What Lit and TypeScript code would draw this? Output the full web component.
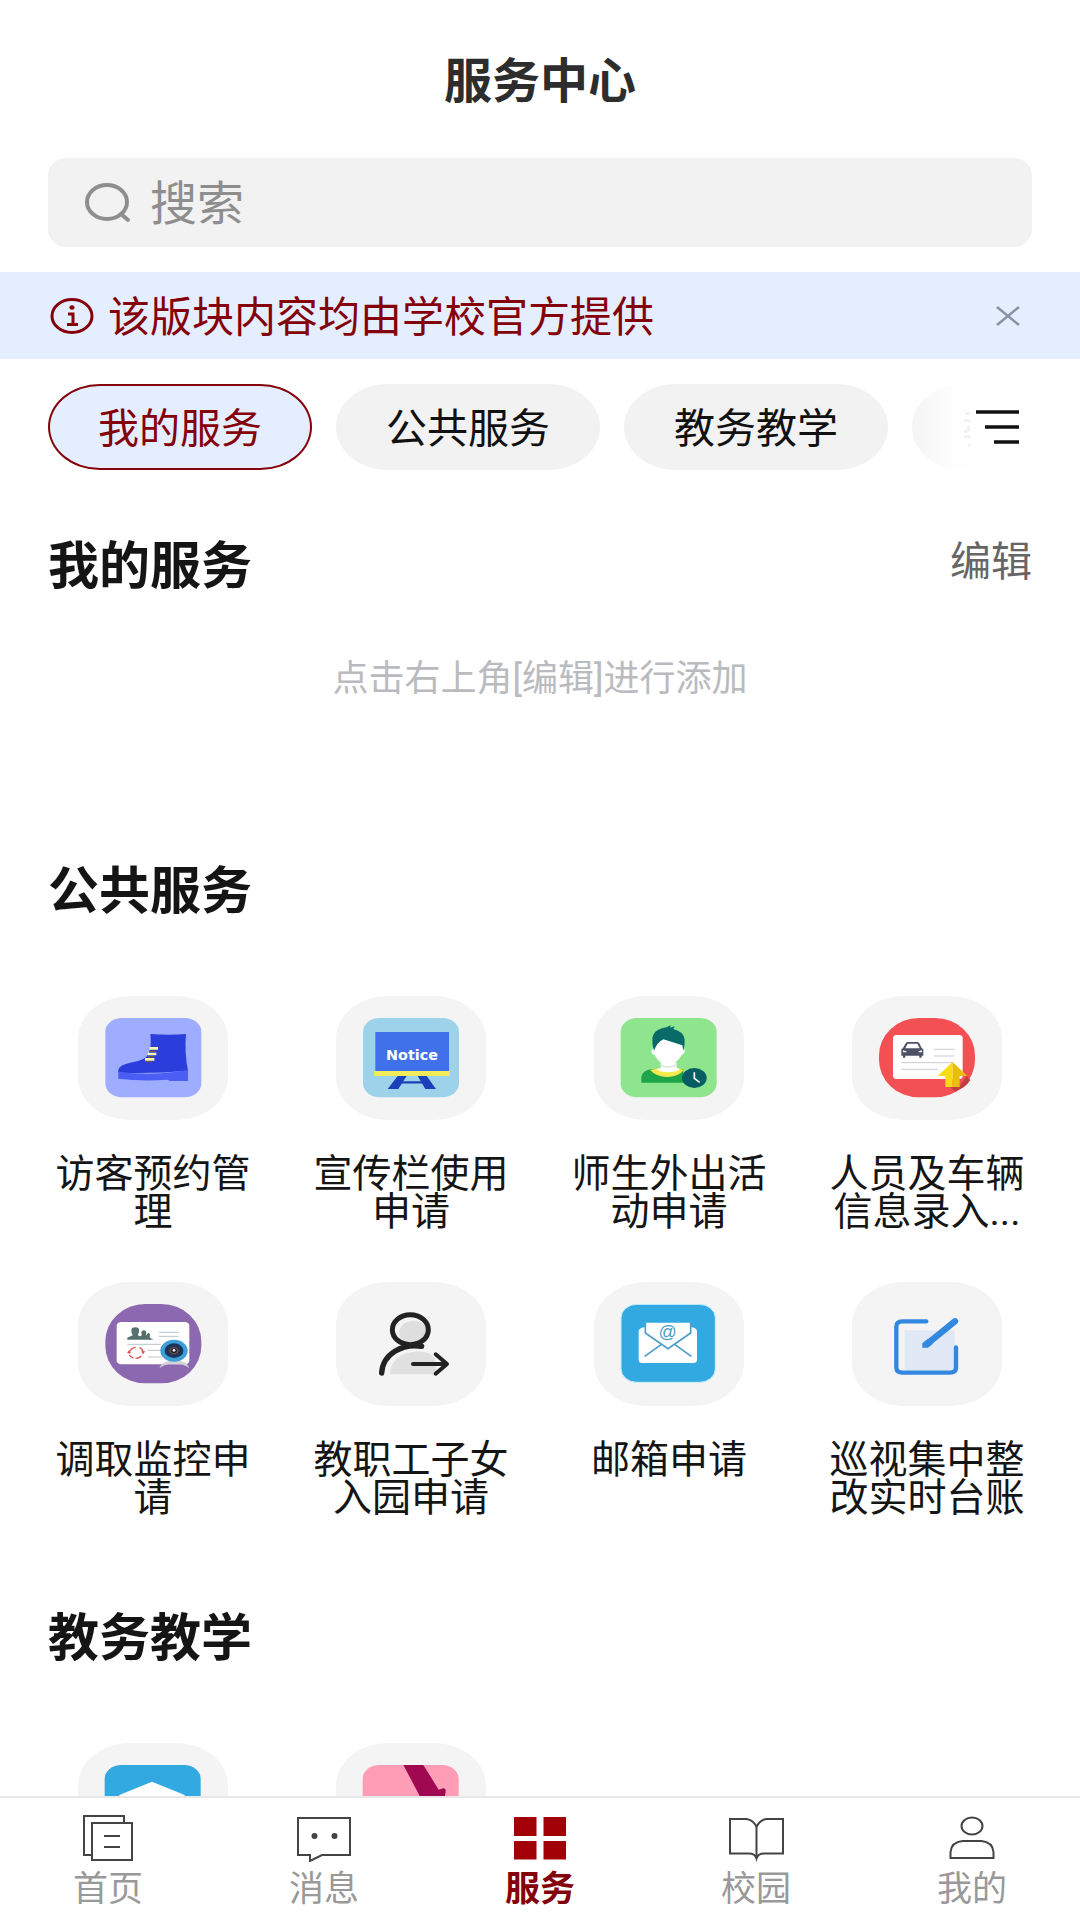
import { LitElement, html, svg, css, TemplateResult, SVGTemplateResult } from "lit";
import { customElement, property, state } from "lit/decorators.js";

const lens = html`<svg width="48" height="40" viewBox="0 0 48 40" fill="none" stroke="#8e8e8e" stroke-width="4" stroke-linecap="round" aria-hidden="true">
  <ellipse cx="23" cy="19" rx="20" ry="17" /><path d="M37 31l7 6" />
</svg>`;

const info = html`<svg width="44" height="38" viewBox="0 0 44 38" fill="none" stroke="#84000a" stroke-width="3" aria-hidden="true">
  <ellipse cx="22" cy="19" rx="20" ry="16.5" /><path d="M18 17h5v10M17 27.5h11" />
  <ellipse cx="22" cy="10.5" rx="2.6" ry="2.2" fill="#84000a" stroke="none" />
</svg>`;

const cross = html`<svg width="24" height="20" viewBox="0 0 24 20" fill="none" stroke="#8690a0" stroke-width="2.4" aria-hidden="true">
  <path d="M1 1l22 18M23 1L1 19" />
</svg>`;

const bars = html`<svg width="44" height="36" viewBox="0 0 44 36" fill="none" stroke="#111" stroke-width="3.4" aria-hidden="true">
  <path d="M0 3h43M9 18h34M18 33h25" />
</svg>`;

/* Service pictures share one 450 x 372 canvas, the proportions of their tile. */
const pictures: Record<string, SVGTemplateResult> = {
  boot: svg`
    <rect x="82" y="66" width="288" height="238" rx="50" ry="42" fill="#9eadff" />
    <path d="M217 114q54 5 107 0q-5 56 6 110q-104 10-209 6q-4-18 22-26c40-10 62-10 72-38q5-20 2-52z" fill="#2b3edb" />
    <path d="M121 227q100 14 209-5v33h-54l-8-4q-76 6-147-3z" fill="#4a5ef6" />
    <path d="M213 166h22M207 182h22M202 197h20" stroke="#6b5a2a" stroke-width="4" />
    <path d="M215 157h25M209 174h26M201 190h28" stroke="#fdf9a8" stroke-width="8" />`,
  notice: svg`
    <rect x="81" y="66" width="288" height="238" rx="50" ry="42" fill="#9cd3ea" />
    <path d="M185 240h27l-25 39h-32zM245 240h27l28 39h-32z" fill="#1b41ba" />
    <path d="M198 259h64" stroke="#1b41ba" stroke-width="7" />
    <rect x="118" y="108" width="221" height="117" fill="#4071ea" />
    <rect x="114" y="225" width="228" height="15" fill="#f1eb5c" />
    <text x="228" y="191" text-anchor="middle" font-family="DejaVu Sans, sans-serif" font-weight="700" font-size="43" fill="#fff">Notice</text>`,
  person: svg`
    <rect x="80" y="66" width="288" height="238" rx="50" ry="42" fill="#8fe58d" />
    <path d="M142 260v-18q4-18 28-22h98v40z" fill="#1ea54a" />
    <path d="M168 222l32-6h48l22 6q-18 21-50 21t-52-21z" fill="#f5ea4c" />
    <path d="M200 200h48v16l10 3q-12 10-36 10t-34-10l12-3z" fill="#fff" />
    <path d="M200 204q24 14 48 0v5q-24 12-48 0z" fill="#dde3e2" />
    <path d="M177 128h91v30q7 2 4 9q-3 9-10 11q-8 17-26 27q-14 7-28 0q-18-10-25-27q-9-2-11-12q0-8 5-8z" fill="#fff" />
    <path d="M180 165q-6-16-5-38q4-24 29-30q15-1 26-10l-2 8l14-4l-4 8q32 8 34 32q1 16-4 34l-3-17l-57-18q-20 10-28 35z" fill="#086b68" />
    <ellipse cx="301" cy="246" rx="37" ry="30" fill="#075d62" />
    <path d="M301 229v18l16 12" fill="none" stroke="#fff" stroke-width="5" />`,
  car: svg`
    <rect x="81" y="66" width="288" height="238" rx="120" ry="112" fill="#f25052" />
    <path d="M344 240l11 12q-14 24-46 34l-14-13h26z" fill="#c23d3e" />
    <rect x="123" y="117" width="209" height="132" rx="12" ry="10" fill="#fff" />
    <path d="M246 160h62M246 180h62M148 200h155M148 220h110" stroke="#c9ccd2" stroke-width="3" />
    <path d="M148 160l5-4l8-14q2-4 7-4h27q5 0 7 4l7 14l5 4v19h-5v6h-7v-6h-42v6h-7v-6h-5zM167 143l-7 14h43l-7-14zM153 163v6h10v-3zM210 163v6h-10v-3z" fill="#4c5165" fill-rule="evenodd" />
    <path d="M302 198l-45 42h23v33h22z" fill="#fada12" /><path d="M302 198l44 42h-23v33h-21z" fill="#e8bd0c" />`,
  camera: svg`
    <rect x="82" y="66" width="288" height="238" rx="120" ry="112" fill="#8b68b0" />
    <rect x="116" y="120" width="218" height="127" rx="14" ry="11" fill="#fff" />
    <path d="M148 173v-6l16-7q-4-6-4-14q0-10 12-10t11 10q0 8-4 14l8 3q4-2 4-5q-4-12 6-13q10 0 7 12l1 4q1-9 7-8q6 2 3 12l2 3l9 5z" fill="#55706f" />
    <path d="M243 151h59M243 163h59M148 187h100M209 205h45M209 225h45" stroke="#bcc5ca" stroke-width="3" />
    <g fill="none" stroke="#dc5150" stroke-width="4"><path d="M153 215q3-17 20-19M184 197q12 5 11 17M190 222q-6 7-17 7M166 228q-9-3-12-10" /></g>
    <path d="M147 213h12l-6-8zM190 208h12l-7 9z" fill="#dc5150" />
    <path d="M244 259q8-22 32-22h28q24 0 29 22q-12-11-28-12h-34q-14 1-27 12z" fill="#d7d2d9" />
    <ellipse cx="288" cy="206" rx="41" ry="33" fill="#3d9fd8" /><ellipse cx="288" cy="206" rx="28" ry="22" fill="#1c3458" />
    <ellipse cx="288" cy="206" rx="14" ry="11" fill="#72504f" /><ellipse cx="288" cy="206" rx="9" ry="7" fill="#261c27" />
    <ellipse cx="288" cy="205" rx="4" ry="4" fill="#fff" />`,
  leave: svg`
    <ellipse cx="232" cy="153" rx="42" ry="37" fill="#dedede" />
    <path d="M162 277q4-64 84-69q38 2 50 20l6 49z" fill="#e0e0e0" />
    <g fill="none" stroke="#222" stroke-linecap="round" stroke-linejoin="round">
      <ellipse cx="223" cy="143" rx="54" ry="45" stroke-width="15" />
      <path d="M137 273C140 215 200 184 257 193" stroke-width="16" />
      <path d="M231 246h101M299 217l34 29l-34 29" stroke-width="12" />
    </g>`,
  mail: svg`
    <rect x="81" y="67" width="283" height="234" rx="48" ry="40" fill="#32a9e1" stroke="#c9f1ff" stroke-width="3" />
    <path d="M134 147q2-9 16-11h5v-14h134v14h5q13 2 15 11v88q-1 8-10 8H144q-9 0-10-8z" fill="#fff" />
    <path d="M154 122v31l68 47l68-47v-31M152 223l49-35M292 223l-49-35" fill="none" stroke="#4a9fc8" stroke-width="5" />
    <text x="221" y="169" text-anchor="middle" font-family="Liberation Sans, sans-serif" font-size="54" fill="#4a9fc8">@</text>`,
  edit: svg`
    <rect x="158" y="145" width="150" height="120" fill="#dfe8f4" />
    <g fill="none" stroke="#3188de">
      <path d="M223 118h-72q-18 0-18 16v122q0 16 18 16h143q18 0 18-16v-60" stroke-width="13" stroke-linecap="round" />
      <path d="M309 118l-84 68" stroke-width="19" stroke-linecap="round" />
    </g>
    <path d="M211 184l16-13l16 14l-13 11q-2 1-4 1h-15z" fill="#3188de" />`,
  school: svg`
    <rect x="80" y="66" width="288" height="238" rx="50" ry="42" fill="#32a9e1" />
    <path d="M222 116l98 40v14l-98 40l-98-40v-14z" fill="#fff" />`,
  draw: svg`
    <rect x="80" y="66" width="288" height="238" rx="50" ry="42" fill="#ff9db6" />
    <path d="M202 66h60l46 74l14-4q8 0 7 10l-4 24h-68z" fill="#a00850" />
    <path d="M126 166q12-9 24 0v10h-24z" fill="#a00850" />`,
};

const navIcons: Record<string, SVGTemplateResult> = {
  home: svg`<path d="M44 9V2H4v39h8M12 9h40v37H12zM24 22h16M24 33h16" />`,
  message: svg`<path d="M2 4h52v37H26l-12 6v-6H2z" /><ellipse cx="18.500" cy="22" rx="2" ry="2" fill="#444" /><ellipse cx="38.500" cy="22" rx="2" ry="2" fill="#444" />`,
  grid: svg`<path d="M2 3h22.500v19H2zM31.500 3H54v19H31.500zM2 27h22.500v18.500H2zM31.500 27H54v18.500H31.500z" fill="#a20007" stroke="none" />`,
  book: svg`<path d="M28.500 45V13q-3-7-10-8H2v34.500h19q6 0 7.500 5q1.500-5 7.500-5h19V5H38.500q-7 1-10 8" />`,
  user: svg`<ellipse cx="28" cy="12" rx="10.500" ry="8.500" /><path d="M6.500 44V38q1-10 12-11h19q11 1 12 11v6z" />`,
};

@customElement("service-tile")
class ServiceTile extends LitElement {
  @property() picture = "";
  @property() label = "";

  static styles = css`
    :host { display: block; }
    .link { display: flex; flex-direction: column; align-items: center; gap: 35px; color: #151515; text-decoration: none; }
    .tile { display: block; width: 150px; height: 124px; border-radius: 52px / 43px; background: #f4f4f4; overflow: hidden; }
    .label { width: 200px; min-height: 76px; font-size: 39px; line-height: 38px; text-align: center; }
  `;

  render() {
    return html`<a class="link" href="#">
      <svg class="tile" viewBox="0 0 450 372" aria-hidden="true">${pictures[this.picture]}</svg>
      <span class="label">${this.label}</span>
    </a>`;
  }
}

@customElement("app-root")
class AppRoot extends LitElement {
  @state() private tab = "我的服务";
  @state() private noticeShown = true;

  private tabs = ["我的服务", "公共服务", "教务教学", "教工服务"];
  private publicServices = [
    ["boot", "访客预约管理"],
    ["notice", "宣传栏使用申请"],
    ["person", "师生外出活动申请"],
    ["car", "人员及车辆信息录入..."],
    ["camera", "调取监控申请"],
    ["leave", "教职工子女入园申请"],
    ["mail", "邮箱申请"],
    ["edit", "巡视集中整改实时台账"],
  ];
  private teachingServices = [["school", ""], ["draw", ""]];
  private nav = [["home", "首页"], ["message", "消息"], ["grid", "服务"], ["book", "校园"], ["user", "我的"]];

  static styles = css`
    :host {
      display: flex; flex-direction: column; height: 100vh; background: #fff; color: #151515;
      font-family: Roboto, "Noto Sans CJK SC", sans-serif;
    }
    * { box-sizing: border-box; }
    button { border: 0; padding: 0; background: none; font: inherit; color: inherit; cursor: pointer; }
    svg { display: block; flex: none; }
    .page { flex: 1; min-height: 0; overflow: hidden auto; scrollbar-width: none; }
    .title { margin: 0; padding-top: 50px; font-size: 48px; line-height: 64px; font-weight: 700; text-align: center; color: #2d2d2d; }
    .search { display: flex; align-items: center; gap: 18px; height: 89px; margin: 44px 48px 25px; padding: 0 36px; border-radius: 18px; background: #f2f2f2; }
    .search-box { flex: 1; min-width: 0; border: 0; padding: 2px 0 0; outline: 0; background: none; font: inherit; font-size: 47px; line-height: 64px; color: #333; }
    .search-box::placeholder { color: #8e8e8e; opacity: 1; }
    .notice { display: flex; align-items: center; gap: 14px; height: 87px; padding: 0 60px 0 50px; background: #e5eeff; color: #84000a; }
    .notice-text { flex: 1; margin: 0; padding-top: 4px; font-size: 42px; line-height: 64px; white-space: nowrap; }
    .tabs { display: flex; margin-top: 25px; padding-left: 48px; }
    .tab-list { display: flex; flex: 1; min-width: 0; gap: 24px; overflow: hidden; }
    .tab { flex: none; width: 264px; height: 86px; padding-top: 4px; border-radius: 52px / 43px; background: #f2f2f2; font-size: 41px; line-height: 64px; color: #111; }
    .tab.active { border: 2px solid #84000a; background: #e5eeff; color: #84000a; }
    .menu { position: relative; display: flex; flex: none; align-items: center; width: 110px; padding-left: 6px; background: #fff; }
    .menu::before { content: ""; position: absolute; top: 0; bottom: 0; right: 100%; width: 72px; background: linear-gradient(to right, rgba(255, 255, 255, 0), rgba(255, 255, 255, 0.94) 80%); }
    .section { margin-top: 85px; }
    .section.mine { margin-top: 60px; }
    .head { display: flex; align-items: center; justify-content: space-between; height: 70px; padding: 0 48px; }
    .heading { margin: 0; padding-top: 4px; font-size: 51px; line-height: 70px; font-weight: 700; }
    .edit { padding-bottom: 6px; font-size: 41px; line-height: 62px; color: #666; }
    .hint { margin: 0; padding: 55px 0 67px; font-size: 36px; line-height: 48px; text-align: center; color: #b9bbbe; }
    .grid { display: grid; grid-template-columns: repeat(4, minmax(0, 1fr)); row-gap: 51px; margin-top: 71px; padding: 0 24px; }
    .nav { display: grid; grid-template-columns: repeat(5, 1fr); flex: none; height: 124px; padding-top: 16px; border-top: 2px solid #e8e8e8; }
    .nav-item { display: flex; flex-direction: column; align-items: center; gap: 2px; text-decoration: none; color: #999; font-size: 35px; line-height: 52px; }
    .nav-item.active { color: #84000a; font-weight: 700; }
  `;

  private services(items: string[][]): TemplateResult {
    return html`<div class="grid">
      ${items.map(([picture, label]) => html`<service-tile picture=${picture} label=${label}></service-tile>`)}
    </div>`;
  }

  render() {
    return html`
      <main class="page">
        <h1 class="title">服务中心</h1>
        <label class="search">${lens}<input class="search-box" type="search" placeholder="搜索" aria-label="搜索" /></label>
        ${this.noticeShown
          ? html`<div class="notice">
              ${info}
              <p class="notice-text">该版块内容均由学校官方提供</p>
              <button aria-label="关闭" @click=${() => (this.noticeShown = false)}>${cross}</button>
            </div>`
          : null}
        <div class="tabs">
          <div class="tab-list">
            ${this.tabs.map(
              (name) => html`<button class="tab ${name === this.tab ? "active" : ""}" @click=${() => (this.tab = name)}>${name}</button>`
            )}
          </div>
          <button class="menu" aria-label="全部分类">${bars}</button>
        </div>
        <section class="section mine">
          <div class="head"><h2 class="heading">我的服务</h2><button class="edit">编辑</button></div>
          <p class="hint">点击右上角[编辑]进行添加</p>
        </section>
        <section class="section">
          <div class="head"><h2 class="heading">公共服务</h2></div>
          ${this.services(this.publicServices)}
        </section>
        <section class="section">
          <div class="head"><h2 class="heading">教务教学</h2></div>
          ${this.services(this.teachingServices)}
        </section>
      </main>
      <nav class="nav">
        ${this.nav.map(
          ([icon, label]) => html`<a class="nav-item ${icon === "grid" ? "active" : ""}" href="#">
            <svg width="56" height="48" viewBox="0 0 56 48" fill="none" stroke="#444" stroke-width="2" aria-hidden="true">${navIcons[icon]}</svg>
            <span>${label}</span>
          </a>`
        )}
      </nav>
    `;
  }
}
